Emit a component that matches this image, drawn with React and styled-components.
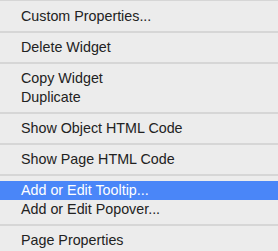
import React from "react"
import styled, { createGlobalStyle } from "styled-components"

const GlobalStyle = createGlobalStyle`
  html, body {
    margin: 0;
    padding: 0;
    background: #ececec;
  }
`

export const Menu = styled.div`
  width: 278px;
  height: 251px;
  overflow: hidden;
  background: #ececec;
  border-top: 1px solid #d6d6d6;
  padding-top: 6px;
  box-sizing: border-box;
  font-family: "Liberation Sans", Arial, Helvetica, sans-serif;
  font-size: 14.3px;
  color: #222222;
`

export const Item = styled.div`
  height: 19px;
  line-height: 19px;
  padding: 0 21px;
  white-space: nowrap;
  background: ${(p) => (p.$active ? "#4a86f8" : "transparent")};
  color: ${(p) => (p.$active ? "#ffffff" : "#222222")};
`

export const Separator = styled.div`
  height: 12px;
  display: flex;
  align-items: center;
  &::after {
    content: "";
    display: block;
    width: 100%;
    height: 2px;
    background: #d6d6d6;
  }
`

const groups = [
  ["Custom Properties..."],
  ["Delete Widget"],
  ["Copy Widget", "Duplicate"],
  ["Show Object HTML Code"],
  ["Show Page HTML Code"],
  ["Add or Edit Tooltip...", "Add or Edit Popover..."],
  ["Page Properties"],
]

export default function App() {
  return (
    <>
      <GlobalStyle />
      <Menu>
        {groups.map((group, gi) => (
          <React.Fragment key={gi}>
            {gi > 0 && <Separator />}
            {group.map((label) => (
              <Item key={label} $active={label === "Add or Edit Tooltip..."}>
                {label}
              </Item>
            ))}
          </React.Fragment>
        ))}
      </Menu>
    </>
  )
}
